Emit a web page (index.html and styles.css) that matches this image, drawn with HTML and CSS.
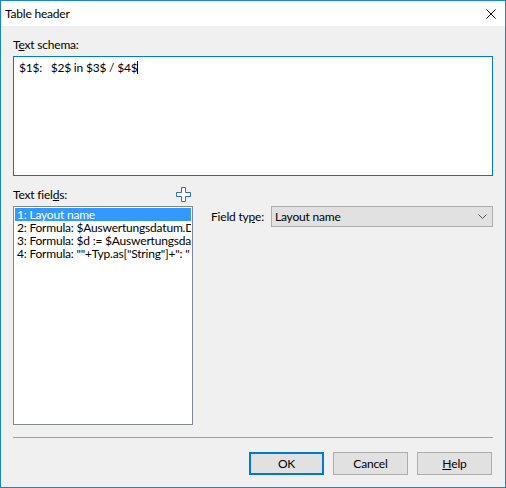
FILE: index.html
```html
<!DOCTYPE html>
<html>
<head>
<meta charset="utf-8">
<link rel="stylesheet" href="styles.css">
</head>
<body>
<div class="window">
  <div class="titlebar">
    <span class="title">Table header</span>
    <svg class="close" width="10" height="10" viewBox="0 0 10 10"><path d="M0.5 0.5 L9.5 9.5 M9.5 0.5 L0.5 9.5" stroke="#000" stroke-width="1" fill="none"/></svg>
  </div>
  <div class="content">
    <div class="label">T<u>e</u>xt schema:</div>
    <div class="schema"><span class="schema-text">$1$:   $2$ in $3$ / $4$</span><span class="caret"></span></div>
    <div class="fields-head">
      <span class="label">Text fiel<u>d</u>s:</span>
      <svg class="plus" width="15" height="15" viewBox="0 0 15 15"><path d="M5.5 0.5 H9.5 V5.5 H14.5 V9.5 H9.5 V14.5 H5.5 V9.5 H0.5 V5.5 H5.5 Z" fill="#fff" stroke="#2a6ad4" stroke-width="1"/></svg>
    </div>
    <div class="fields-row">
      <div class="listbox">
        <div class="item selected">1: Layout name</div>
        <div class="item">2: Formula: $Auswertungsdatum.De</div>
        <div class="item">3: Formula: $d := $Auswertungsdatu</div>
        <div class="item">4: Formula: ""+Typ.as["String"]+": "</div>
      </div>
      <div class="fieldtype">
        <span class="label ft-label">Field ty<u>p</u>e:</span>
        <div class="select">
          <span>Layout name</span>
          <svg class="chev" width="9" height="5" viewBox="0 0 9 5"><path d="M0.5 0.5 L4.5 4.5 L8.5 0.5" stroke="#555" stroke-width="1" fill="none"/></svg>
        </div>
      </div>
    </div>
    <div class="sep"></div>
    <div class="buttons">
      <div class="btn default">OK</div>
      <div class="btn">Cancel</div>
      <div class="btn"><u>H</u>elp</div>
    </div>
  </div>
</div>
</body>
</html>
```
FILE: styles.css
```css
* { box-sizing: border-box; }
html, body { margin: 0; padding: 0; }
body {
  font-family: Lato, "Noto Sans", sans-serif;
  font-size: 12px;
  letter-spacing: -0.2px;
  color: #000;
  background: #f0f0f0;
}
.window {
  width: 506px;
  height: 488px;
  border: 1px solid #1883d7;
  background: #f0f0f0;
  display: flex;
  flex-direction: column;
}
.titlebar {
  height: 25px;
  background: #fff;
  display: flex;
  align-items: center;
  justify-content: space-between;
  padding: 0 9px 0 4px;
}
.title { line-height: 15px; }
.close { display: block; }
.content {
  padding: 11px 12px 0 12px;
  display: flex;
  flex-direction: column;
}
.label { line-height: 15px; height: 15px; }
u { text-underline-offset: 1px; }
.schema {
  margin-top: 4px;
  height: 120px;
  border: 1px solid #0078d7;
  background: #fff;
  padding: 3px 5px;
  line-height: 15px;
  display: flex;
  align-items: flex-start;
}
.schema-text { white-space: pre; }
.caret {
  width: 1px;
  height: 13px;
  margin-top: 1px;
  background: #000;
}
.fields-head {
  margin-top: 11px;
  width: 180px;
  height: 15px;
  display: flex;
  justify-content: space-between;
  align-items: center;
}
.plus { display: block; margin-right: 2px; }
.fields-row {
  margin-top: 4px;
  display: flex;
  align-items: flex-start;
}
.listbox {
  width: 180px;
  height: 219px;
  border: 1px solid #828790;
  background: #fff;
  padding: 1px;
  overflow: hidden;
}
.item {
  height: 13px;
  line-height: 13px;
  padding-left: 2px;
  white-space: nowrap;
  overflow: hidden;
}
.item.selected { background: #3399ff; color: #fff; }
.fieldtype {
  flex: 1;
  margin-left: 18px;
  display: flex;
  align-items: center;
}
.ft-label { width: 60px; }
.select {
  flex: 1;
  height: 21px;
  border: 1px solid #adadad;
  background: #e1e1e1;
  display: flex;
  align-items: center;
  justify-content: space-between;
  padding: 0 5px 0 3px;
}
.chev { display: block; }
.sep {
  margin-top: 12px;
  height: 1px;
  background: #a0a0a0;
}
.buttons {
  margin-top: 14px;
  display: flex;
  justify-content: flex-end;
  gap: 9px;
  padding-right: 1px;
}
.btn {
  width: 75px;
  height: 23px;
  border: 1px solid #adadad;
  background: #e1e1e1;
  display: flex;
  align-items: center;
  justify-content: center;
}
.btn.default { border: 2px solid #0078d7; }
```
